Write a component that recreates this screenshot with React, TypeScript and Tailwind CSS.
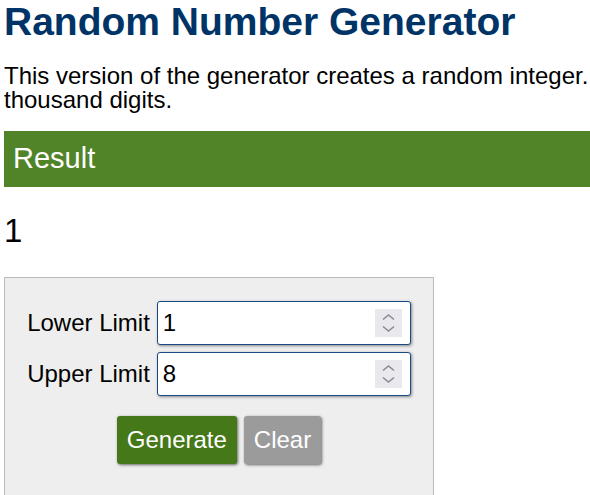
import React, { useState } from "react";

const SpinArrows = () => (
  <div className="absolute right-[8px] top-[7px] w-[27px] h-[28px] bg-[#e9e9ed]">
    <svg width="27" height="28" viewBox="0 0 27 28" fill="none">
      <path d="M8 10.5L13.5 6L19 10.5" stroke="#8a8a96" strokeWidth="1.6" />
      <path d="M8 17.5L13.5 22L19 17.5" stroke="#8a8a96" strokeWidth="1.6" />
    </svg>
  </div>
);

interface RowProps {
  label: string;
  value: string;
  onChange: (v: string) => void;
}

const LimitRow = ({ label, value, onChange }: RowProps) => (
  <div className="flex items-center gap-[7px]">
    <span className="text-[24px] text-black">{label}</span>
    <div className="relative w-[254px] h-[44px] bg-white border border-[#1a4a86] rounded-[3px] shadow-[1px_1px_3px_#888]">
      <input
        type="text"
        value={value}
        onChange={(e) => onChange(e.target.value)}
        className="w-full h-full pl-[5px] pr-[40px] text-[24px] text-black bg-transparent outline-none"
      />
      <SpinArrows />
    </div>
  </div>
);

export default function App() {
  const [lower, setLower] = useState("1");
  const [upper, setUpper] = useState("8");
  const [result, setResult] = useState("1");

  const generate = () => {
    const lo = parseInt(lower, 10);
    const hi = parseInt(upper, 10);
    if (isNaN(lo) || isNaN(hi) || hi < lo) return;
    setResult(String(lo + Math.floor(Math.random() * (hi - lo + 1))));
  };

  const clear = () => {
    setLower("");
    setUpper("");
  };

  return (
    <div className="w-[590px] h-[495px] overflow-hidden bg-white font-['Liberation_Sans',Arial,sans-serif]">
      <div className="w-[900px] pl-[4px]">
        <h1 className="text-[39px] leading-[44px] font-bold text-[#003366]">
          Random Number Generator
        </h1>
        <p className="mt-[20px] text-[24px] leading-[24px] text-black whitespace-nowrap">
          This version of the generator creates a random integer. It can deal with very large integers up to a few
          <br />
          thousand digits.
        </p>

        <h2 className="mt-[19px] h-[56px] pl-[9px] bg-[#518428] text-white text-[29px] leading-[54px]">
          Result
        </h2>

        <div className="mt-[25px] text-[33px] leading-[37px] text-black">{result}</div>

        <div className="mt-[28px] w-[430px] bg-[#eeeeee] border border-[#bbbbbb] pt-[23px] pb-[40px] flex flex-col items-center">
          <div className="flex flex-col items-end gap-[7px]">
            <LimitRow label="Lower Limit" value={lower} onChange={setLower} />
            <LimitRow label="Upper Limit" value={upper} onChange={setUpper} />
          </div>
          <div className="mt-[20px] flex gap-[7px]">
            <button
              onClick={generate}
              className="h-[48px] px-[10px] rounded-[3px] bg-[#447819] text-white text-[24px] shadow-[1px_1px_3px_#666]"
            >
              Generate
            </button>
            <button
              onClick={clear}
              className="h-[48px] px-[10px] rounded-[3px] bg-[#9b9b9b] text-white text-[24px] shadow-[1px_1px_3px_#666]"
            >
              Clear
            </button>
          </div>
        </div>
      </div>
    </div>
  );
}
